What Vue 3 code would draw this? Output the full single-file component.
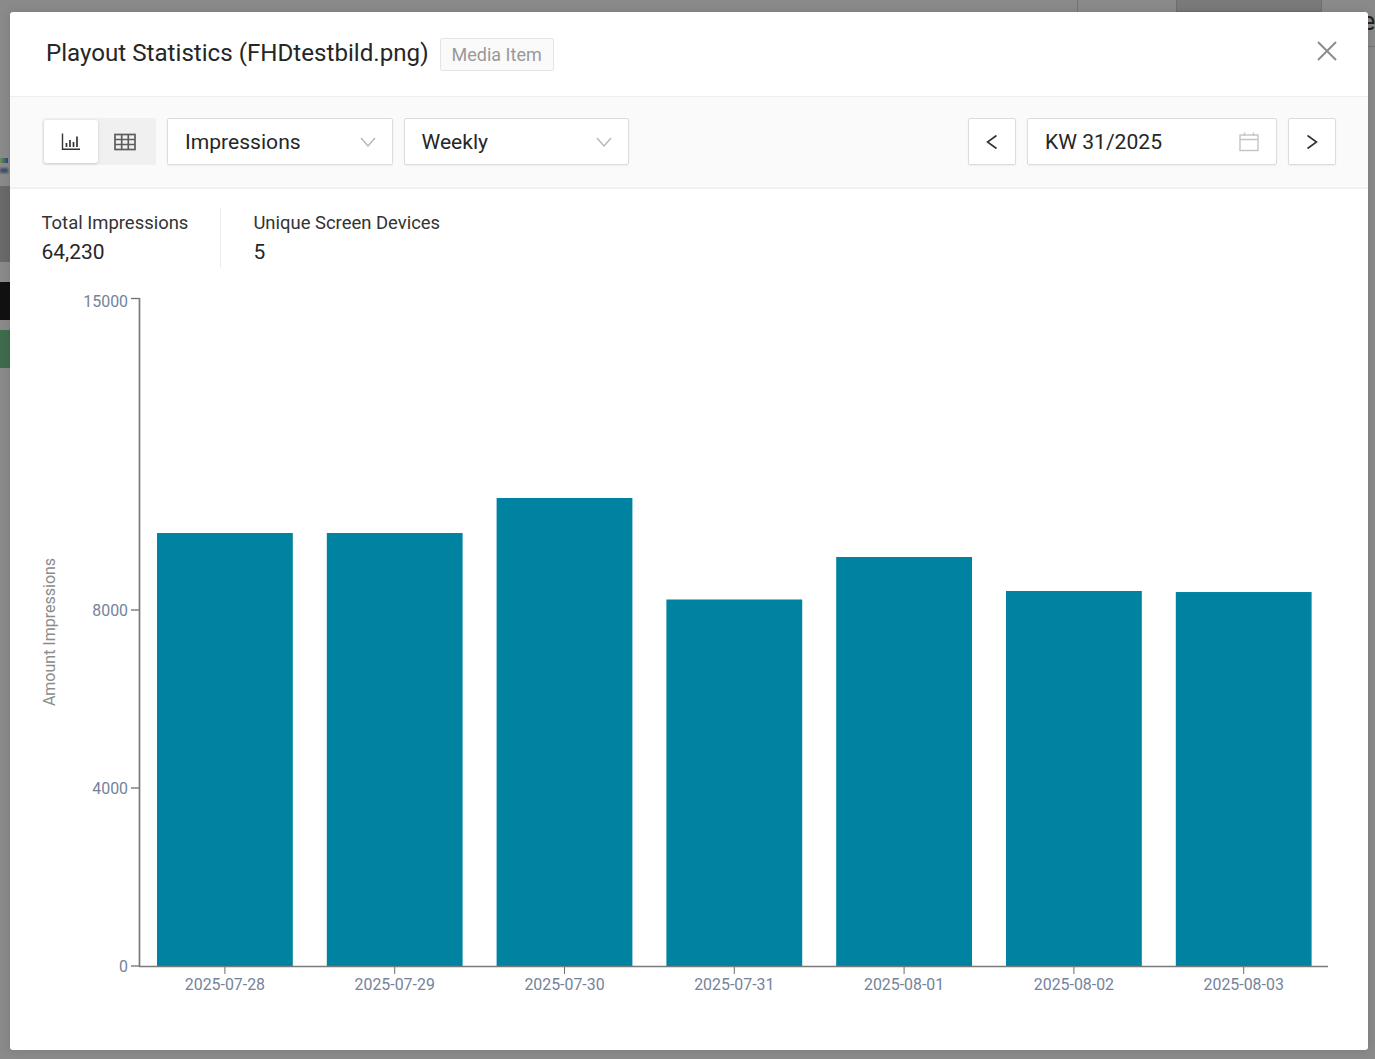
<template>
  <div class="page">
    <!-- what shows behind the dimmed backdrop -->
    <div class="behind behind--tab"></div>
    <div class="behind behind--line"></div>
    <div class="behind behind--logo"></div>
    <div class="behind behind--logotext"></div>
    <div class="behind behind--dark"></div>
    <div class="behind behind--black"></div>
    <div class="behind behind--green"></div>
    <div class="behind behind--rule"></div>
    <span class="behind behind--letter">e</span>

    <div class="modal">
      <header class="modal__header">
        <h2 class="modal__title">Playout Statistics (FHDtestbild.png)</h2>
        <span class="tag">Media Item</span>
        <button class="close" aria-label="Close">
          <svg width="20" height="20" viewBox="0 0 20 20">
            <path d="M1 1L19 19M19 1L1 19" stroke="#8c8c8c" stroke-width="2" fill="none" />
          </svg>
        </button>
      </header>

      <div class="toolbar">
        <div class="switch">
          <button class="switch__btn switch__btn--active" aria-label="Chart">
            <svg width="20" height="18" viewBox="0 0 20 18" fill="none" stroke="#333" stroke-width="1.4">
              <path d="M1.5 0.5V16.3H19" />
              <path d="M5.5 10V14M9 7V14M12.5 9V14M16 3.5V14" stroke-width="1.7" />
            </svg>
          </button>
          <button class="switch__btn" aria-label="Table">
            <svg width="22" height="18" viewBox="0 0 22 18" fill="none" stroke="#5c5c5c" stroke-width="1.7">
              <rect x="1" y="1.5" width="20" height="15" />
              <path d="M1 6.5H21M1 11.5H21M7.7 1.5V16.5M14.3 1.5V16.5" />
            </svg>
          </button>
        </div>
        <div class="select">
          <span>Impressions</span>
          <svg class="chevron" width="16" height="10" viewBox="0 0 16 10">
            <path d="M1 1L8 9L15 1" stroke="#b5b5b5" stroke-width="1.3" fill="none" />
          </svg>
        </div>
        <div class="select">
          <span>Weekly</span>
          <svg class="chevron" width="16" height="10" viewBox="0 0 16 10">
            <path d="M1 1L8 9L15 1" stroke="#b5b5b5" stroke-width="1.3" fill="none" />
          </svg>
        </div>
        <div class="toolbar__spacer"></div>
        <button class="nav" aria-label="Previous">
          <svg width="12" height="16" viewBox="0 0 12 16">
            <path d="M10.5 1.5L1.5 8L10.5 14.5" stroke="#333" stroke-width="1.6" fill="none" />
          </svg>
        </button>
        <div class="week">
          <span>KW 31/2025</span>
          <svg width="20" height="20" viewBox="0 0 20 20" fill="none" stroke="#c4c4c4" stroke-width="1.4">
            <rect x="1" y="3" width="18" height="15.5" />
            <path d="M1 7.5H19M5.5 0.5V4M14.5 0.5V4" />
          </svg>
        </div>
        <button class="nav" aria-label="Next">
          <svg width="12" height="16" viewBox="0 0 12 16">
            <path d="M1.5 1.5L10.5 8L1.5 14.5" stroke="#333" stroke-width="1.6" fill="none" />
          </svg>
        </button>
      </div>

      <div class="stats">
        <div class="stat">
          <div class="stat__label">Total Impressions</div>
          <div class="stat__value">64,230</div>
        </div>
        <div class="stat">
          <div class="stat__label">Unique Screen Devices</div>
          <div class="stat__value">5</div>
        </div>
      </div>

      <svg class="chart" width="1358" height="740" viewBox="10 280 1358 740">
        <g v-for="(bar, i) in bars" :key="bar.date">
          <rect :x="barX(i)" :y="valueY(bar.value)" width="135.8" :height="baseY - valueY(bar.value)" fill="#0083a0" />
          <line :x1="barX(i) + 67.9" :x2="barX(i) + 67.9" :y1="baseY" :y2="baseY + 8" stroke="#6e6e6e" />
          <text class="chart__tick" :x="barX(i) + 67.9" y="990" text-anchor="middle">{{ bar.date }}</text>
        </g>
        <g v-for="tick in ticks" :key="tick">
          <line x1="131" x2="139.5" :y1="valueY(tick)" :y2="valueY(tick)" stroke="#6e6e6e" stroke-width="1.3" />
          <text class="chart__tick" x="128" :y="valueY(tick) + (tick === 15000 ? 8 : 6)" text-anchor="end">{{ tick }}</text>
        </g>
        <path d="M139.5 298V966.5M139 966.5H1328" stroke="#7a7a7a" stroke-width="1.7" fill="none" />
        <text class="chart__title" transform="translate(55 632) rotate(-90)" text-anchor="middle">Amount Impressions</text>
      </svg>
    </div>
  </div>
</template>

<script setup>
const baseY = 966
const ticks = [0, 4000, 8000, 15000]

const bars = [
  { date: '2025-07-28', value: 9730 },
  { date: '2025-07-29', value: 9730 },
  { date: '2025-07-30', value: 10517 },
  { date: '2025-07-31', value: 8236 },
  { date: '2025-08-01', value: 9191 },
  { date: '2025-08-02', value: 8427 },
  { date: '2025-08-03', value: 8404 },
]

const valueY = (value) => baseY - value * 0.0445
const barX = (i) => 157 + i * 169.8
</script>

<style>
html,
body {
  margin: 0;
  background: #8a8a8a;
}
</style>

<style scoped>
.page {
  position: relative;
  height: 1059px;
  overflow: hidden;
  background: #8a8a8a;
  padding: 12px 7px 9px 10px;
  box-sizing: border-box;
  font-family: Roboto, "Liberation Sans", sans-serif;
  color: #262626;
}

.behind {
  position: absolute;
}

.behind--tab {
  left: 1176px;
  top: 0;
  width: 146px;
  height: 12px;
  background: #7a7a7a;
  border: 1px solid #6e6e6e;
  border-top: 0;
  box-sizing: border-box;
}

.behind--line {
  left: 1077px;
  top: 0;
  width: 1px;
  height: 12px;
  background: #757575;
}

.behind--logo {
  left: 0;
  top: 158px;
  width: 8px;
  height: 5px;
  background: linear-gradient(90deg, #7d8a45, #3d6d78, #33486a);
  filter: blur(0.6px);
}

.behind--logotext {
  left: 0;
  top: 168px;
  width: 8px;
  height: 5px;
  background: #3f5066;
  filter: blur(0.8px);
}

.behind--dark {
  left: 0;
  top: 186px;
  width: 10px;
  height: 76px;
  background: #6a6a6a;
}

.behind--black {
  left: 0;
  top: 282px;
  width: 10px;
  height: 38px;
  background: #111;
}

.behind--green {
  left: 0;
  top: 330px;
  width: 10px;
  height: 38px;
  background: #3f6b4d;
}

.behind--rule {
  left: 1368px;
  top: 46px;
  width: 7px;
  height: 1px;
  background: #757575;
}

.behind--letter {
  left: 1362px;
  top: 7px;
  font-size: 25px;
  color: #222;
}

.modal {
  position: relative;
  display: flex;
  flex-direction: column;
  height: 100%;
  background: #fff;
  border-radius: 3px;
  overflow: hidden;
  box-shadow: 0 0 10px rgba(0, 0, 0, 0.12);
}

.modal__header {
  display: flex;
  align-items: center;
  height: 84px;
  padding: 0 31px 0 36px;
  box-sizing: border-box;
  flex: none;
}

.modal__title {
  margin: 0;
  font-size: 24.15px;
  font-weight: 400;
  line-height: 32px;
  position: relative;
  top: -1.5px;
}

.tag {
  margin-left: 11px;
  height: 33px;
  padding: 0 11px;
  line-height: 31px;
  font-size: 18px;
  color: #999;
  background: #fafafa;
  border: 1px solid #e4e4e4;
  border-radius: 2px;
  box-sizing: border-box;
}

.close {
  margin-left: auto;
  padding: 0;
  border: 0;
  background: none;
  display: flex;
  position: relative;
  top: -3px;
}

.toolbar {
  display: flex;
  align-items: center;
  gap: 11px;
  flex: none;
  height: 93px;
  padding: 0 32px 1px;
  background: #fafafa;
  border-top: 1px solid #efefef;
  border-bottom: 2px solid #f1f1f1;
  box-sizing: border-box;
}

.toolbar__spacer {
  flex: 1;
}

.switch {
  display: flex;
  width: 114px;
  height: 47px;
  padding: 2px 0 2px 2px;
  background: #f0f0f0;
  border-radius: 3px;
  box-sizing: border-box;
}

.switch__btn {
  display: flex;
  align-items: center;
  justify-content: center;
  width: 54px;
  padding: 0;
  border: 0;
  border-radius: 3px;
  background: none;
}

.switch__btn--active {
  background: #fff;
  box-shadow: 0 1px 3px rgba(0, 0, 0, 0.15);
}

.select,
.week,
.nav {
  display: flex;
  align-items: center;
  height: 47px;
  background: #fff;
  border: 1px solid #dcdcdc;
  border-radius: 2px;
  box-shadow: 0 1px 2px rgba(0, 0, 0, 0.05);
  box-sizing: border-box;
  font-size: 21.1px;
  font-family: inherit;
  color: #262626;
}

.select {
  justify-content: space-between;
  width: 225.5px;
  padding: 0 16px 0 17px;
}

.week {
  justify-content: space-between;
  width: 250px;
  padding: 0 17px;
}

.nav {
  justify-content: center;
  width: 48px;
  padding: 0;
}

.stats {
  display: flex;
  flex: none;
  height: 60px;
  margin-top: 19px;
  padding-left: 31.5px;
}

.stat {
  padding-right: 32px;
}

.stat + .stat {
  padding-left: 32px;
  border-left: 1px solid #ececec;
}

.stat__label {
  font-size: 18.45px;
  line-height: 30px;
  color: #333;
}

.stat__value {
  font-size: 21px;
  line-height: 29px;
  color: #262626;
}

.chart {
  display: block;
  flex: none;
  margin-top: 12px;
}

.chart__tick {
  font-size: 15.9px;
  fill: #74839b;
}

.chart__title {
  font-size: 16px;
  fill: #8c8c8c;
}
</style>
